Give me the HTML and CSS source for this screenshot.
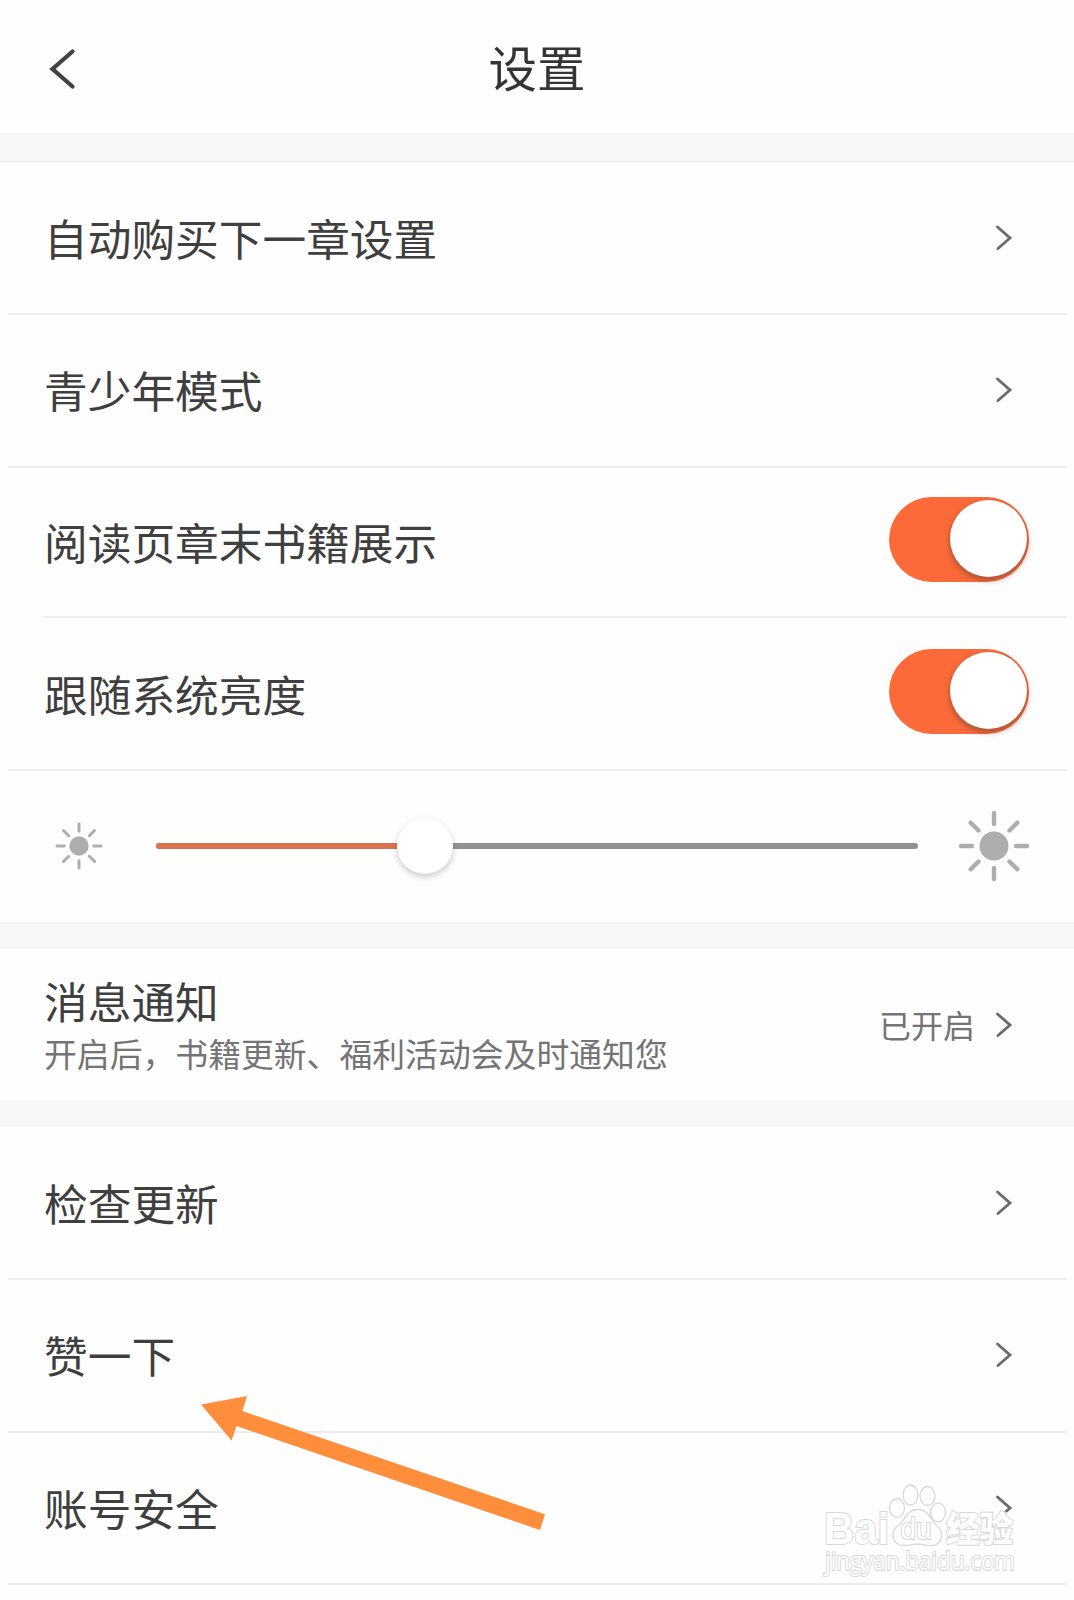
FILE: index.html
```html
<!DOCTYPE html>
<html lang="zh-CN">
<head>
<meta charset="utf-8">
<title>设置</title>
<link rel="stylesheet" href="styles.css">
</head>
<body>
<svg class="defs" width="0" height="0" aria-hidden="true">
  <symbol id="chevron" viewBox="0 0 18 28"><path d="M2.500 3L15 14L3 24.500" fill="none" stroke="#6c6c6c" stroke-width="2.9" stroke-linecap="round"/></symbol>
  <symbol id="sun" viewBox="-36 -36 72 72">
    <circle r="14.5" fill="#adadad"/>
    <path d="M0-33V-22M0 22V33M-33 0H-22M22 0H33M-23.3-23.3L-15.5-15.5M15.5 15.5L23.3 23.3M23.3-23.3L15.5-15.5M-15.5 15.5L-23.3 23.3" stroke="#adadad" stroke-width="4.4" stroke-linecap="round"/>
  </symbol>
</svg>
<main class="screen">
  <header class="header">
    <svg class="back" viewBox="0 0 28 44"><path d="M23.500 4.500L3.500 22L23.500 39.500" fill="none" stroke="#424242" stroke-width="4.200" stroke-linecap="round"/></svg>
    <h1 class="title">设置</h1>
  </header>
  <section class="group group-main">
    <div class="row"><span class="label">自动购买下一章设置</span><svg class="chevron"><use href="#chevron"/></svg></div>
    <div class="row"><span class="label">青少年模式</span><svg class="chevron"><use href="#chevron"/></svg></div>
    <div class="row row-toggle row-inset"><span class="label">阅读页章末书籍展示</span><span class="toggle"><span class="toggle-knob"></span></span></div>
    <div class="row row-toggle row-follow"><span class="label">跟随系统亮度</span><span class="toggle"><span class="toggle-knob"></span></span></div>
    <div class="brightness">
      <svg class="sun-small"><use href="#sun"/></svg>
      <div class="slider"><span class="slider-fill"></span><span class="slider-knob"></span></div>
      <svg class="sun-large"><use href="#sun"/></svg>
    </div>
  </section>
  <section class="group group-notice">
    <div class="notice-text"><span class="label">消息通知</span><span class="hint">开启后，书籍更新、福利活动会及时通知您</span></div>
    <span class="status">已开启</span><svg class="chevron"><use href="#chevron"/></svg>
  </section>
  <section class="group group-more">
    <div class="row"><span class="label">检查更新</span><svg class="chevron"><use href="#chevron"/></svg></div>
    <div class="row"><span class="label">赞一下</span><svg class="chevron"><use href="#chevron"/></svg></div>
    <div class="row"><span class="label">账号安全</span><svg class="chevron"><use href="#chevron"/></svg></div>
  </section>
  <svg class="arrow" viewBox="0 0 346 136"><path d="M1 8.500L47 0L42.300 15L345 118.300L340 134L36.500 30L31.500 44.500Z" fill="#ff8e3c"/></svg>
  <svg class="watermark" viewBox="0 0 204 104">
    <g class="mark">
      <text class="mark-latin" x="4" y="64" textLength="65" lengthAdjust="spacingAndGlyphs">Bai</text>
      <ellipse cx="77" cy="28" rx="7.5" ry="9.500"/>
      <ellipse cx="90.500" cy="15" rx="7.300" ry="10"/>
      <ellipse cx="107.500" cy="16" rx="7.500" ry="9.500"/>
      <ellipse cx="118" cy="32.500" rx="7.500" ry="9.300"/>
      <path d="M98 29.500C86 29.500 85 41 77.500 46C69 53 73 65.500 84 65.500C90 65.500 94 64 98 64C102 64 106 66 112 65.500C122 65 125 53 117 46C110 40 109 29.500 98 29.500Z"/>
      <text class="mark-du" x="80.500" y="59" textLength="31" lengthAdjust="spacingAndGlyphs">du</text>
      <text class="mark-cjk" x="126" y="62" textLength="67" lengthAdjust="spacingAndGlyphs">经验</text>
      <text class="mark-url" x="5" y="90" textLength="190" lengthAdjust="spacingAndGlyphs">jingyan.baidu.com</text>
    </g>
  </svg>
</main>
</body>
</html>
```
FILE: styles.css
```css
* { box-sizing: border-box; }
body {
  margin: 0;
  background: #f7f7f7;
  color: #3f3f3f;
  font-family: "Noto Sans CJK SC", sans-serif;
}
.defs { display: block; }
.screen {
  position: relative;
  display: flex;
  flex-direction: column;
  width: 1074px;
  height: 1600px;
  overflow: hidden;
}
.header {
  display: grid;
  grid-template-columns: 100px 1fr 100px;
  align-items: center;
  height: 133px;
  padding-top: 4px;
  background: #fefefe;
}
.back { width: 28px; height: 44px; margin-left: 49px; }
.title {
  margin: 0;
  padding-bottom: 6px;
  color: #343434;
  font-size: 48.500px;
  font-weight: 400;
  line-height: 60px;
  text-align: center;
}
.group { background: #fefefe; }
.group-main { height: 761px; margin-top: 28px; border-top: 1px solid #ececec; }
.row {
  display: flex;
  align-items: center;
  justify-content: space-between;
  height: 152.700px;
  margin: 0 7px 0 8px;
  padding: 0 54px 0 36px;
  border-bottom: 2px solid #ededed;
}
.row:first-child { height: 153px; }
.label { padding-bottom: 2px; font-size: 43.700px; line-height: 60px; white-space: nowrap; }
.chevron { flex: none; width: 18px; height: 28px; }
.row-toggle { height: 150.600px; padding-right: 38px; }
.row-inset { margin-left: 43px; padding-left: 1px; }
.row-follow { height: 152.500px; }
.toggle {
  display: flex;
  justify-content: flex-end;
  width: 140px;
  height: 85px;
  margin-bottom: 5px;
  padding: 3px 2px;
  border-radius: 43px;
  background: #fb6a38;
}
.toggle-knob {
  width: 77px;
  height: 77px;
  border-radius: 50%;
  background: #fff;
  box-shadow: 0 3px 5px 1px rgba(110, 65, 50, .5);
}
.brightness { display: flex; align-items: center; height: 151px; padding: 0 44px 0 55px; }
.sun-small { width: 48px; height: 48px; }
.slider {
  position: relative;
  width: 762px;
  height: 6px;
  margin: 0 40px 0 53px;
  border-radius: 3px;
  background: #939191;
}
.slider-fill { display: block; width: 269px; height: 6px; border-radius: 3px; background: #d8734e; }
.slider-knob {
  position: absolute;
  left: 241px;
  top: -25px;
  width: 56px;
  height: 56px;
  border-radius: 50%;
  background: #fff;
  box-shadow: 0 3px 6px rgba(70, 70, 90, .28);
}
.sun-large { width: 72px; height: 72px; }
.group-notice {
  display: flex;
  align-items: center;
  height: 151px;
  margin-top: 27px;
  padding: 0 61px 0 44px;
}
.notice-text { display: flex; flex: 1; flex-direction: column; }
.notice-text .label { padding-bottom: 0; line-height: 56px; }
.hint { color: #747474; font-size: 32.850px; line-height: 50px; }
.status { margin-right: 20px; padding-bottom: 2px; color: #747474; font-size: 32px; line-height: 48px; }
.group-more { height: 473px; margin-top: 27px; }
.arrow { position: absolute; left: 200px; top: 1396px; width: 346px; height: 136px; }
.watermark { position: absolute; left: 820px; top: 1480px; width: 204px; height: 104px; overflow: visible; }
.mark { fill: #fefefe; stroke: #d8d8d8; stroke-width: 1.300px; }
.mark text { paint-order: stroke fill; stroke-width: 2px; }
.mark-latin { font: 700 44px "Liberation Sans", sans-serif; }
.mark-du { font: 400 29px "Liberation Sans", sans-serif; }
.mark-cjk { font: 900 35px "Noto Sans CJK SC", sans-serif; }
.mark-url { font: 400 25px "Open Sans", sans-serif; }
```
